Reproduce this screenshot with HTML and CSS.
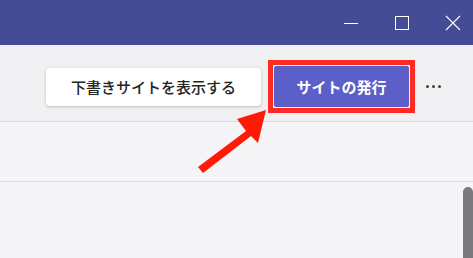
FILE: index.html
```html
<!DOCTYPE html>
<html lang="ja">
  <head>
    <meta charset="UTF-8" />
    <title>サイトの発行</title>
    <link rel="stylesheet" href="styles.css">
  </head>
  <body>
    <div class="window">
      <div class="titlebar">
        <div class="control">
          <svg width="16" height="16" viewBox="0 0 16 16"><path d="M1 8.5h14" stroke="#fff" stroke-width="1"/></svg>
        </div>
        <div class="control">
          <svg width="16" height="16" viewBox="0 0 16 16"><rect x="1.5" y="1.5" width="13" height="13" fill="none" stroke="#fff" stroke-width="1"/></svg>
        </div>
        <div class="control">
          <svg width="16" height="16" viewBox="0 0 16 16"><path d="M1 1l14 14M15 1L1 15" stroke="#fff" stroke-width="1.1"/></svg>
        </div>
      </div>

      <div class="toolbar">
        <button class="btn btn-draft">下書きサイトを表示する</button>
        <div class="highlight">
          <button class="btn btn-publish">サイトの発行</button>
        </div>
        <div class="more">
          <span></span><span></span><span></span>
        </div>
      </div>

      <div class="band"></div>
      <div class="content"></div>

      <div class="scrollbar"></div>

      <!-- annotation arrow -->
      <svg class="arrow" width="80" height="70" viewBox="0 0 80 70">
        <polygon points="68,0 39,9 48,21 0,57 5,63 53,26 60,33" fill="#ff1a05"/>
      </svg>
    </div>
  </body>
</html>
```

FILE: styles.css
```css
* {
  box-sizing: border-box;
}
body {
  margin: 0;
  font-family: "Noto Sans CJK JP", "Noto Sans", sans-serif;
  background: #f5f4f7;
}
.window {
  position: relative;
  width: 473px;
  height: 258px;
  overflow: hidden;
  background: #f5f4f7;
}
.titlebar {
  height: 45px;
  background: #454c96;
  display: flex;
  justify-content: flex-end;
  align-items: center;
  gap: 35px;
  padding-right: 12px;
}
.control {
  width: 16px;
  height: 16px;
  display: flex;
}
.toolbar {
  height: 77px;
  background: #f0eff2;
  border-bottom: 1px solid #dcdbdf;
  display: flex;
  align-items: center;
  padding: 0 0 0 46px;
  padding-top: 7px;
}
.btn {
  font-family: "Noto Sans CJK JP", "Noto Sans", sans-serif;
  font-size: 15px;
  border: none;
  border-radius: 4px;
  padding: 0;
  cursor: pointer;
}
.btn-draft {
  width: 215px;
  height: 38px;
  background: #fff;
  color: #242424;
  font-weight: 500;
  box-shadow: 0 1px 3px rgba(0, 0, 0, 0.22);
}
.highlight {
  margin-left: 7px;
  border: 5px solid #ff2b22;
  padding: 1px;
  background: #f0eff2;
}
.btn-publish {
  display: block;
  width: 135px;
  height: 41px;
  background: #5b5fc7;
  color: #fff;
  font-weight: 700;
  border-radius: 2px;
}
.more {
  display: flex;
  gap: 3px;
  margin-left: 11px;
}
.more span {
  width: 3px;
  height: 3px;
  border-radius: 50%;
  background: #424242;
}
.band {
  height: 60px;
  border-bottom: 1px solid #dcdbdf;
}
.scrollbar {
  position: absolute;
  left: 463px;
  top: 187px;
  width: 10px;
  height: 80px;
  background: #7b7a7d;
  border-radius: 5px 5px 0 0;
}
.arrow {
  position: absolute;
  left: 198px;
  top: 110px;
}
```
